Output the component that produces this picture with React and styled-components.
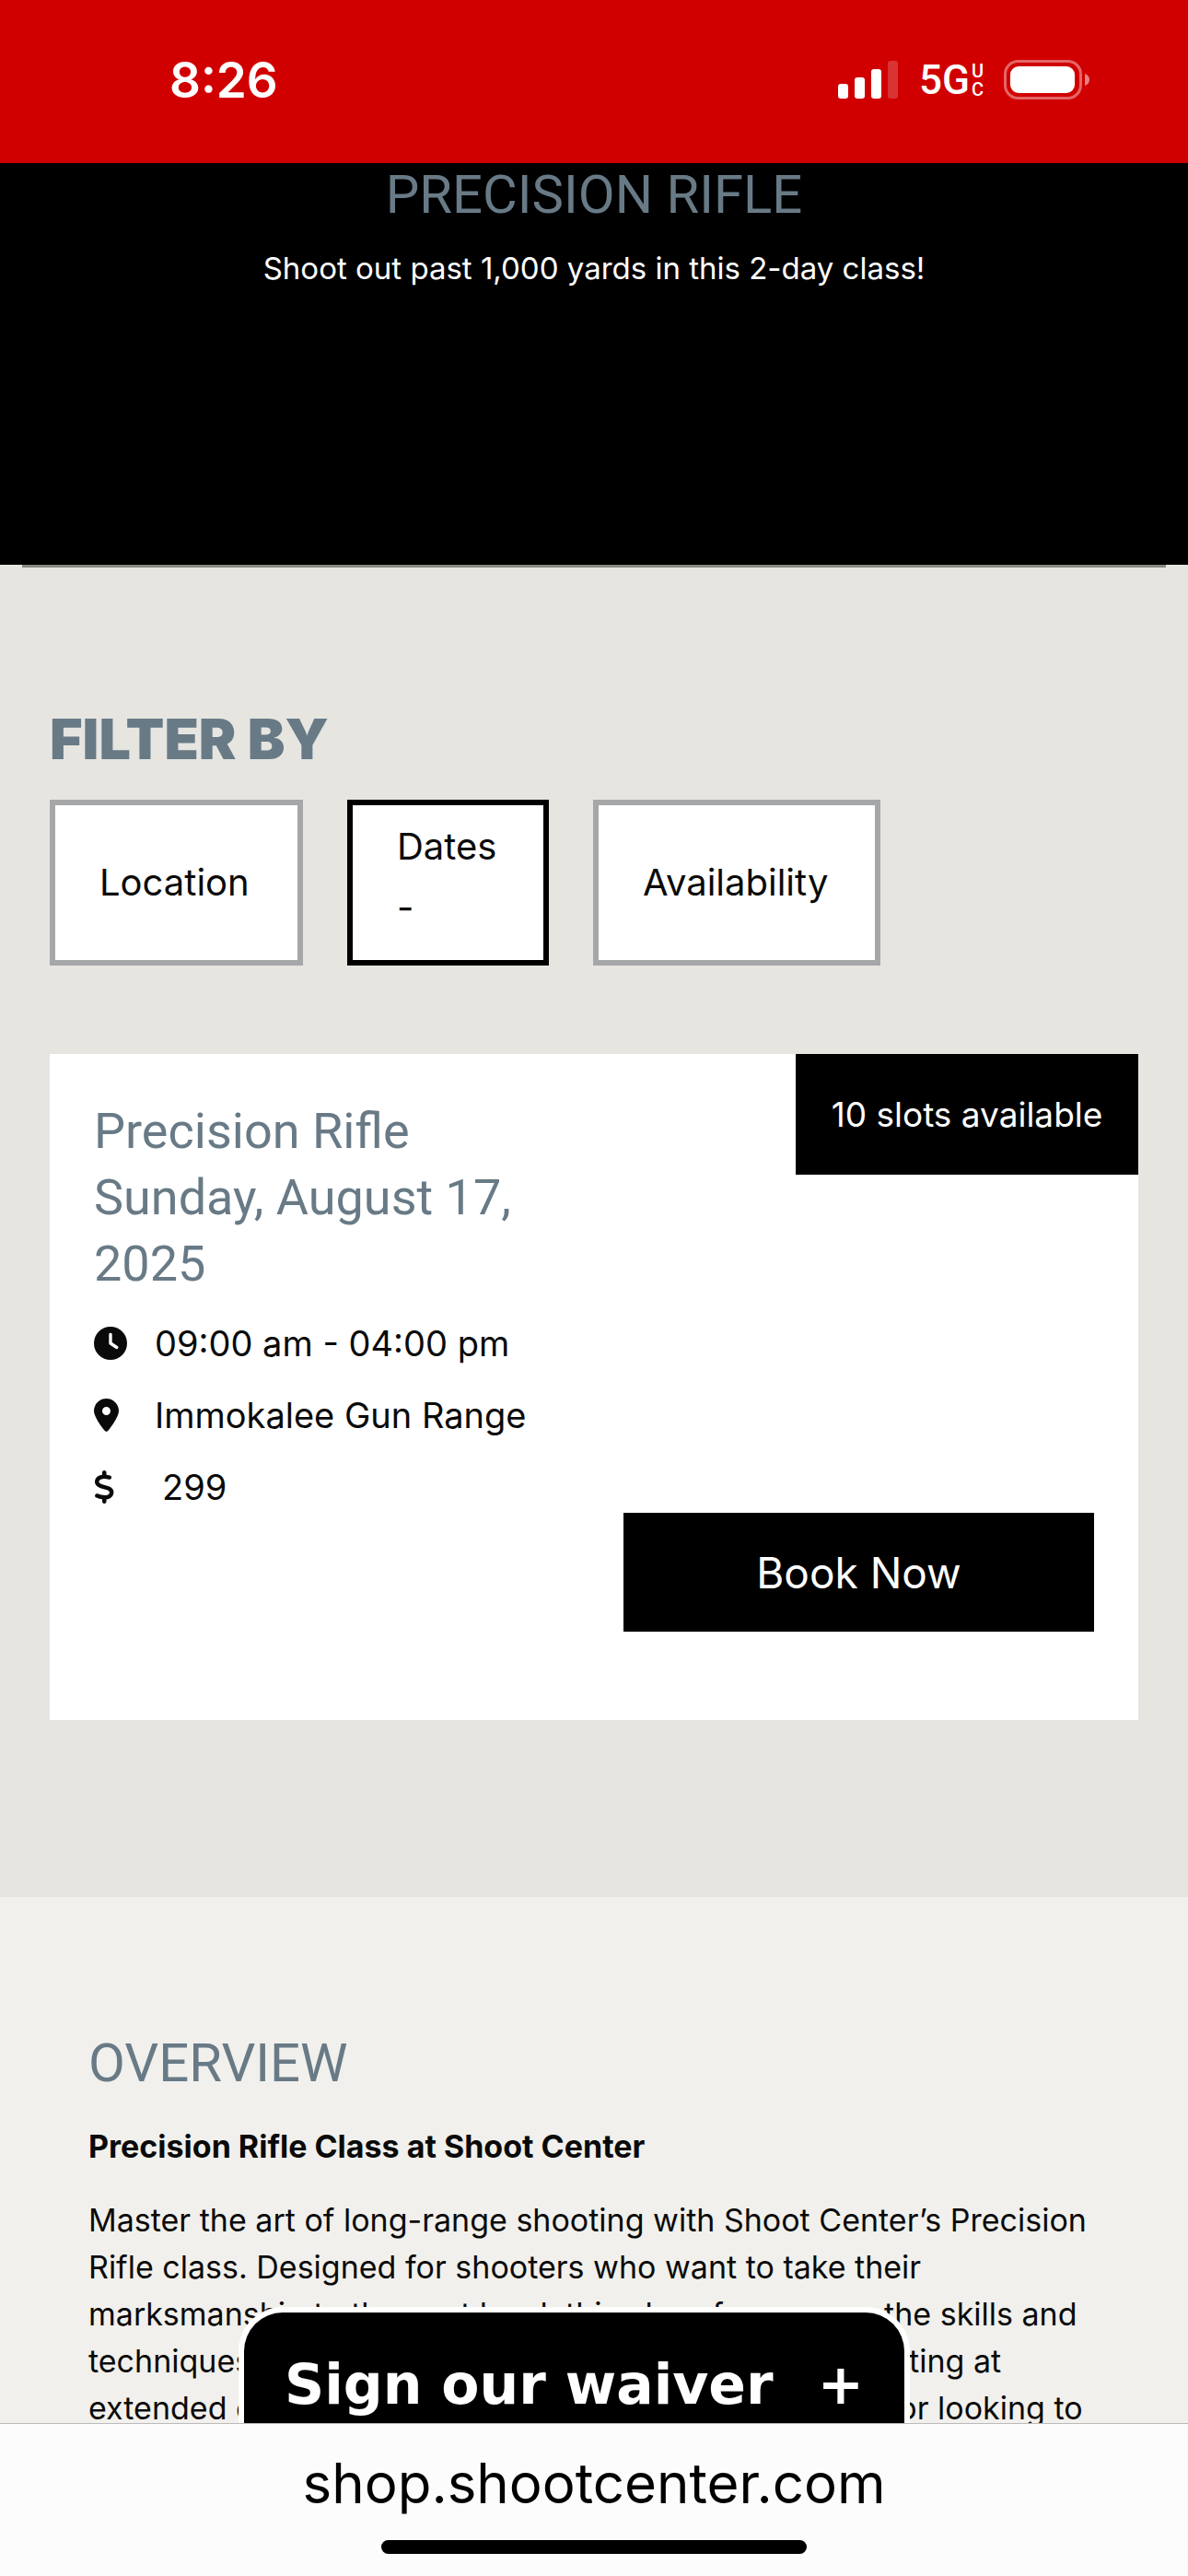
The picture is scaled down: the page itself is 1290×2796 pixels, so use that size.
import styled, { createGlobalStyle } from "styled-components";
import { FaClock, FaLocationDot, FaDollarSign } from "react-icons/fa6";

function App() {
  return (
    <Page>
      <GlobalStyle />
      <StatusBar>
        <Time>8:26</Time>
        <StatusIcons>
          <Signal />
          <Network>
            5G
            <Carrier>
              <span>U</span>
              <span>C</span>
            </Carrier>
          </Network>
          <Battery />
        </StatusIcons>
      </StatusBar>

      <Hero>
        <Title>PRECISION RIFLE</Title>
        <Subtitle>Shoot out past 1,000 yards in this 2-day class!</Subtitle>
      </Hero>

      <Listing>
        <Divider />
        <FilterTitle>FILTER BY</FilterTitle>
        <Filters>
          <Filter $width={275}>Location</Filter>
          <Filter $width={219} $active>
            Dates
            <br />-
          </Filter>
          <Filter $width={312}>Availability</Filter>
        </Filters>

        <Card>
          <Badge>10 slots available</Badge>
          <Info>
            <CardTitle>
              Precision Rifle
              <br />
              Sunday, August 17, 2025
            </CardTitle>
            <Details>
              <Detail>
                <FaClock preserveAspectRatio="xMinYMid" />
                <span>09:00 am - 04:00 pm</span>
              </Detail>
              <Detail>
                <FaLocationDot preserveAspectRatio="xMinYMid" />
                <span>Immokalee Gun Range</span>
              </Detail>
              <Detail $indent>
                <FaDollarSign preserveAspectRatio="xMinYMid" />
                <span>299</span>
              </Detail>
            </Details>
          </Info>
          <BookButton type="button">Book Now</BookButton>
        </Card>
      </Listing>

      <Overview>
        <OverviewTitle>OVERVIEW</OverviewTitle>
        <Lead>Precision Rifle Class at Shoot Center</Lead>
        <Copy>
          Master the art of long-range shooting with Shoot Center’s Precision
          <br />
          Rifle class. Designed for shooters who want to take their
          <br />
          marksmanship to the next level, this class focuses on the skills and
          <br />
          techniques necessary for accurate and consistent shooting at
          <br />
          extended distances. Whether you are a serious hunter or looking to
        </Copy>
      </Overview>

      <Dock>
        <Waiver type="button">
          Sign our waiver <span>+</span>
        </Waiver>
        <AddressBar>
          <Address href="#">shop.shootcenter.com</Address>
          <HomeIndicator />
        </AddressBar>
      </Dock>
    </Page>
  );
}

const Signal = () => (
  <svg width="66" height="42" viewBox="0 0 66 42" fill="#fff">
    <rect x="0" y="25" width="11" height="16" rx="3" />
    <rect x="18" y="18" width="11" height="23" rx="3" />
    <rect x="36" y="9" width="11" height="32" rx="3" />
    <rect x="54" y="0" width="11" height="41" rx="3" opacity="0.2" />
  </svg>
);

const Battery = () => (
  <svg width="94" height="44" viewBox="0 0 94 44">
    <rect x="1.5" y="1.5" width="82" height="40" rx="14" fill="none" stroke="#fff" strokeWidth="3" opacity="0.4" />
    <rect x="7" y="7" width="70" height="29" rx="9" fill="#fff" />
    <path d="M88 15c3 1 5 3.500 5 6.500s-2 5.500-5 6.500z" fill="#fff" opacity="0.5" />
  </svg>
);

export default App;

const GlobalStyle = createGlobalStyle`
  * {
    box-sizing: border-box;
  }

  body {
    margin: 0;
    background: #f1f0ec;
    color: #0a0a0a;
    font-family: Inter, sans-serif;
  }

  h1, h2, h3, p, ul {
    margin: 0;
    padding: 0;
  }

  button {
    font-family: inherit;
    cursor: pointer;
  }
`;

const Page = styled.div`
  min-height: 100vh;
  display: flex;
  flex-direction: column;
`;

const StatusBar = styled.header`
  height: 177px;
  padding: 0 106px 4px 184px;
  display: flex;
  align-items: center;
  justify-content: space-between;
  background: #d10000;
  color: #fff;
`;

const Time = styled.span`
  font-size: 53px;
  font-weight: 600;
`;

const StatusIcons = styled.div`
  display: flex;
  align-items: center;
  gap: 22px;
`;

const Network = styled.span`
  display: flex;
  align-items: center;
  gap: 2px;
  font-family: Roboto, sans-serif;
  font-size: 44px;
  font-weight: 500;
`;

const Carrier = styled.span`
  display: flex;
  flex-direction: column;
  font-size: 20px;
  line-height: 20px;
`;

const Hero = styled.section`
  height: 436px;
  background: #000;
  text-align: center;
`;

const Title = styled.h1`
  color: #687a86;
  font-family: Roboto, sans-serif;
  font-size: 58px;
  font-weight: 400;
  line-height: 68px;
`;

const Subtitle = styled.p`
  margin-top: 20px;
  color: #fff;
  font-size: 33px;
  font-weight: 400;
  line-height: 52px;
`;

const Listing = styled.section`
  padding: 0 54px 192px;
  background: #e6e5e0;
`;

const Divider = styled.hr`
  height: 3px;
  margin: 0 -30px;
  border: 0;
  background: #878782;
`;

const FilterTitle = styled.h2`
  margin-top: 150px;
  color: #687a86;
  font-size: 61px;
  font-weight: 900;
  line-height: 72px;
`;

const Filters = styled.div`
  display: flex;
  gap: 48px;
  margin-top: 30px;
`;

const Filter = styled.button`
  width: ${(props) => props.$width}px;
  height: 180px;
  padding: 0 48px ${(props) => (props.$active ? "12px" : "0")};
  border: 6px solid ${(props) => (props.$active ? "#000" : "#a6a7a9")};
  background: #fff;
  color: #0a0a0a;
  font-size: 40px;
  line-height: 66px;
  text-align: left;
  white-space: nowrap;
`;

const Card = styled.article`
  position: relative;
  margin-top: 96px;
  padding: 48px 48px 96px;
  min-height: 723px;
  display: flex;
  justify-content: space-between;
  background: #fff;
`;

const Badge = styled.div`
  position: absolute;
  top: 0;
  right: 0;
  width: 372px;
  background: #000;
  color: #fff;
  font-size: 37px;
  line-height: 131px;
  text-align: center;
`;

const Info = styled.div`
  width: 510px;
`;

const CardTitle = styled.h3`
  color: #687a86;
  font-family: Roboto, sans-serif;
  font-size: 54px;
  font-weight: 400;
  line-height: 72px;
`;

const Details = styled.ul`
  margin-top: 11px;
  list-style: none;
`;

const Detail = styled.li`
  height: 78px;
  display: grid;
  grid-template-columns: ${(props) => (props.$indent ? "74px" : "66px")} 1fr;
  align-items: center;
  font-size: 38px;
  white-space: nowrap;

  svg {
    width: 36px;
    height: 36px;
  }
`;

const BookButton = styled.button`
  width: 511px;
  height: 129px;
  align-self: flex-end;
  border: 0;
  background: #000;
  color: #fff;
  font-size: 46px;
`;

const Overview = styled.section`
  flex: 1;
  padding: 144px 96px 0;
  background: #f1f0ec;
`;

const OverviewTitle = styled.h2`
  color: #687a86;
  font-family: Roboto, sans-serif;
  font-size: 58px;
  font-weight: 400;
  line-height: 72px;
`;

const Lead = styled.p`
  margin-top: 29px;
  font-size: 34px;
  font-weight: 700;
  line-height: 51px;
`;

const Copy = styled.p`
  margin-top: 29px;
  font-size: 34px;
  line-height: 51px;
  white-space: nowrap;
`;

const Dock = styled.footer`
  position: fixed;
  right: 0;
  bottom: 0;
  left: 0;
`;

const Waiver = styled.button`
  width: 729px;
  height: 126px;
  margin-left: 259px;
  padding: 43px 44px 0;
  display: flex;
  align-items: flex-start;
  justify-content: space-between;
  border: 6px solid #fff;
  border-bottom: 0;
  border-radius: 48px 48px 0 0;
  background: #000;
  color: #fff;
  font-family: "DejaVu Sans", sans-serif;
  font-size: 60px;
  font-weight: 700;
  line-height: 70px;
`;

const AddressBar = styled.div`
  height: 166px;
  display: flex;
  flex-direction: column;
  align-items: center;
  justify-content: space-between;
  padding: 24px 0;
  border-top: 1px solid #bbb;
  background: #fcfcfc;
`;

const Address = styled.a`
  color: #000;
  font-size: 60px;
  line-height: 80px;
  text-decoration: none;
`;

const HomeIndicator = styled.div`
  width: 462px;
  height: 15px;
  border-radius: 8px;
  background: #000;
`;
